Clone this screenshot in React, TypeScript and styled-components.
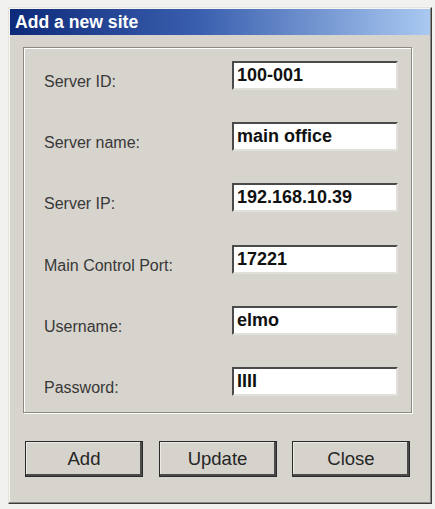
import React from "react";
import styled, { createGlobalStyle } from "styled-components";

const Global = createGlobalStyle`
  html, body {
    margin: 0;
    padding: 0;
    background: #f1f1ef;
  }
  body {
    font-family: "Liberation Sans", Arial, sans-serif;
  }
`;

const Window = styled.div`
  box-sizing: border-box;
  width: 424px;
  margin: 7px 0 0 8px;
  padding: 1px;
  background: #d7d4cd;
  border: 1px solid;
  border-color: #e4e2dc #3c3c3c #3c3c3c #e4e2dc;
  box-shadow: inset -1px -1px #8a8882, inset 1px 1px #f6f5f2;
  display: flex;
  flex-direction: column;
`;

const TitleBar = styled.div`
  height: 26px;
  line-height: 26px;
  padding-left: 5px;
  background: linear-gradient(90deg, #0e2a7a 0%, #3a5fae 45%, #a9c9f1 100%);
  color: #ffffff;
  font-size: 17.6px;
  font-weight: bold;
  white-space: nowrap;
`;

const Body = styled.div`
  display: flex;
  flex-direction: column;
  padding: 12px 18px 25px 13px;
`;

const GroupBox = styled.div`
  box-sizing: border-box;
  height: 366px;
  padding: 13px 13px 14px 20px;
  border: 1px solid #8c8a84;
  box-shadow: 1px 1px 0 #ffffff, inset 1px 1px 0 #ffffff;
  display: grid;
  grid-template-columns: 1fr 166px;
  grid-auto-rows: 29px;
  row-gap: 32.2px;
`;

const Label = styled.label`
  padding-top: 6px;
  line-height: 29px;
  font-size: 16px;
  color: #383838;
  white-space: nowrap;
`;

const Field = styled.input`
  box-sizing: border-box;
  width: 166px;
  height: 29px;
  margin: 0;
  padding: 0 0 0 3px;
  border: 2px solid;
  border-color: #4a4a4a #e2e0da #e2e0da #4a4a4a;
  background: #ffffff;
  font-family: "Liberation Sans", Arial, sans-serif;
  font-size: 18px;
  font-weight: bold;
  color: #111111;
  outline: none;
`;

const ButtonRow = styled.div`
  display: flex;
  justify-content: space-between;
  margin-top: 28px;
  padding: 0 2px;
`;

const Button = styled.button`
  box-sizing: border-box;
  width: 118px;
  height: 36px;
  margin: 0;
  padding: 0;
  background: #d6d3cc;
  border: 1px solid #2a2a2a;
  box-shadow: inset -2px -2px 0 #4a4a4a, inset 1px 1px 0 #ecebe7;
  font-family: "Liberation Sans", Arial, sans-serif;
  font-size: 18.5px;
  color: #262626;
`;

const fields = [
  { id: "sid", label: "Server ID:", value: "100-001" },
  { id: "sname", label: "Server name:", value: "main office" },
  { id: "sip", label: "Server IP:", value: "192.168.10.39" },
  { id: "port", label: "Main Control Port:", value: "17221" },
  { id: "user", label: "Username:", value: "elmo" },
  { id: "pass", label: "Password:", value: "IIII" },
];

export default function App() {
  return (
    <>
      <Global />
      <Window>
        <TitleBar>Add a new site</TitleBar>
        <Body>
          <GroupBox>
            {fields.map((f) => (
              <React.Fragment key={f.id}>
                <Label htmlFor={f.id}>{f.label}</Label>
                <Field id={f.id} defaultValue={f.value} spellCheck={false} />
              </React.Fragment>
            ))}
          </GroupBox>
          <ButtonRow>
            <Button>Add</Button>
            <Button>Update</Button>
            <Button>Close</Button>
          </ButtonRow>
        </Body>
      </Window>
    </>
  );
}
